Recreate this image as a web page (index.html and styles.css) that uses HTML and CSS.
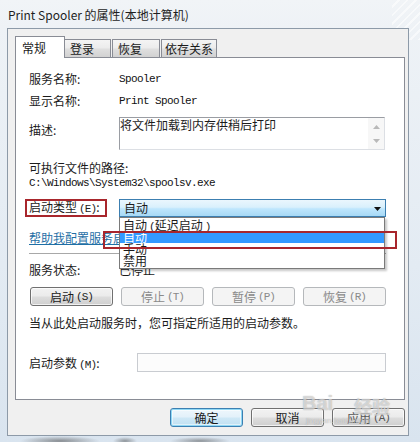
FILE: index.html
```html
<!DOCTYPE html>
<html lang="zh-CN">
<head>
<meta charset="utf-8">
<title>Print Spooler 的属性(本地计算机)</title>
<link rel="stylesheet" href="styles.css">
</head>
<body>
<div class="window">
  <div class="titlebar">Print Spooler 的属性(本地计算机)</div>
  <div class="client">
    <div class="tabs">
      <div class="tab active">常规</div>
      <div class="tab">登录</div>
      <div class="tab">恢复</div>
      <div class="tab">依存关系</div>
    </div>
    <div class="panel">
      <div class="row line22"><span class="label">服务名称:</span><span class="mono">Spooler</span></div>
      <div class="row line22"><span class="label">显示名称:</span><span class="mono">Print Spooler</span></div>
      <div class="row desc">
        <span class="label desc-label">描述:</span>
        <div class="textarea">
          <div class="ta-text">将文件加载到内存供稍后打印</div>
          <div class="ta-scroll">
            <svg width="7" height="4" viewBox="0 0 7 4"><path d="M3.5 0 L7 4 L0 4 Z" fill="#b9b9b9"/></svg>
            <svg width="7" height="4" viewBox="0 0 7 4"><path d="M0 0 L7 0 L3.5 4 Z" fill="#b9b9b9"/></svg>
          </div>
        </div>
      </div>
      <div class="path-label">可执行文件的路径:</div>
      <div class="path mono">C:\Windows\System32\spoolsv.exe</div>
      <div class="row startup">
        <span class="label">启动类型<span class="acc">(E)</span>:</span>
        <div class="combo">
          <span class="combo-text">自动</span>
          <svg class="combo-arrow" width="7" height="4" viewBox="0 0 7 4"><path d="M0 0 L7 0 L3.5 4 Z" fill="#111"/></svg>
          <div class="droplist">
            <div class="opt">自动<span class="acc">(</span>延迟启动<span class="acc">)</span></div>
            <div class="opt sel">自动</div>
            <div class="opt">手动</div>
            <div class="opt">禁用</div>
          </div>
        </div>
      </div>
      <a class="link" href="#">帮助我配置服务启动选项。</a>
      <div class="sep"></div>
      <div class="row status"><span class="label">服务状态:</span><span>已停止</span></div>
      <div class="btnrow">
        <div class="btn">启动<span class="acc">(S)</span></div>
        <div class="btn disabled">停止<span class="acc">(T)</span></div>
        <div class="btn disabled">暂停<span class="acc">(P)</span></div>
        <div class="btn disabled">恢复<span class="acc">(R)</span></div>
      </div>
      <p class="hint">当从此处启动服务时，您可指定所适用的启动参数。</p>
      <div class="row params">
        <span class="label wide">启动参数<span class="acc">(M)</span>:</span>
        <div class="input"></div>
      </div>
      <div class="mark mark-label"></div>
      <div class="mark mark-option"></div>
    </div>
    <div class="footer">
      <div class="btn wbtn default">确定</div>
      <div class="btn wbtn">取消</div>
      <div class="btn wbtn dim">应用<span class="acc">(A)</span></div>
    </div>
  </div>
  <div class="watermark"><span class="wm-big">Bai</span><span class="wm-cn">经验</span><span class="wm-small">jingyan.baidu.com</span></div>
</div>
</body>
</html>
```

FILE: styles.css
```css
* { box-sizing: border-box; }
html, body { margin: 0; padding: 0; }
body {
  font-family: "Noto Sans CJK SC", "Liberation Sans", sans-serif;
  font-size: 12px;
  color: #1b1b1b;
  background: #dfe8f1;
}
.window {
  position: relative;
  width: 420px;
  height: 442px;
  display: flex;
  flex-direction: column;
  overflow: hidden;
  background:
    repeating-linear-gradient(135deg, rgba(255,255,255,0) 0 4px, rgba(255,255,255,0.55) 4px 6px) 392px 0 / 28px 40px no-repeat,
    radial-gradient(ellipse 40px 5px at 60px 441px, rgba(70,70,70,0.55), rgba(70,70,70,0) 100%),
    radial-gradient(ellipse 12px 4px at 125px 441px, rgba(70,70,70,0.5), rgba(70,70,70,0) 100%),
    radial-gradient(ellipse 30px 4px at 200px 441px, rgba(70,70,70,0.5), rgba(70,70,70,0) 100%),
    linear-gradient(180deg, #f1f4f7 0, #eef2f6 28px, #e3ebf3 60%, #d9e4ef 100%);
}
.titlebar {
  height: 28px;
  padding: 7px 0 0 8px;
  line-height: 16px;
  font-size: 12px;
  color: #1e1e1e;
  white-space: nowrap;
}
.client {
  flex: 1;
  margin: 0 11px 6px 7px;
  border: 1px solid #8d9aa8;
  background: #f0f0f0;
  padding: 7px 3px 8px 7px;
  display: flex;
  flex-direction: column;
}
.tabs {
  display: flex;
  align-items: flex-end;
  height: 22px;
  margin-bottom: -1px;
  position: relative;
  z-index: 2;
}
.tab {
  height: 18px;
  margin-bottom: 1px;
  border: 1px solid #898c95;
  border-bottom: none;
  background: linear-gradient(180deg, #f4f4f4 0, #ececec 45%, #dedede 55%, #d2d2d2 100%);
  padding: 0 0 0 5px;
  line-height: 17px;
  white-space: nowrap;
  color: #1b1b1b;
}
.tab.active {
  height: 22px;
  margin-bottom: 0;
  background: #ffffff;
  padding: 2px 0 0 6px;
  line-height: 17px;
  width: 50px;
  position: relative;
  z-index: 3;
}
.tab:nth-child(2) { width: 47px; margin-left: -1px; }
.tab:nth-child(3) { width: 48px; margin-left: 1px; }
.tab:nth-child(4) { width: 56px; margin-left: 1px; padding-left: 3px; }

.panel {
  position: relative;
  z-index: 1;
  width: 390px;
  height: 343px;
  border: 1px solid #898c95;
  background: #ffffff;
  padding: 10px 18px 0 13px;
}
.row { display: flex; align-items: center; }
.line22 { height: 22px; line-height: 22px; }
.label { width: 90px; flex: none; white-space: nowrap; }
.label.wide { width: 108px; }
.mono {
  font-family: "Liberation Mono", monospace;
  font-size: 11px;
  letter-spacing: -0.6px;
  color: #111;
}
.acc {
  font-family: "Liberation Mono", monospace;
  font-size: 11px;
  letter-spacing: -0.9px;
  margin-left: 2px;
}
.desc { margin-top: 5px; align-items: flex-start; }
.desc-label { margin-top: 5px; line-height: 16px; }
.textarea {
  width: 266px;
  height: 33px;
  border: 1px solid #dcdfe4;
  border-top-color: #9a9da3;
  border-left-color: #9a9da3;
  display: flex;
}
.ta-text { flex: 1; line-height: 14px; padding-left: 0; white-space: nowrap; }
.ta-scroll {
  width: 16px;
  background: #f7f7f7;
  display: flex;
  flex-direction: column;
  align-items: center;
  justify-content: space-between;
  padding: 7px 0 6px;
}
.path-label { margin-top: 10px; line-height: 16px; }
.path { line-height: 15px; }
.startup { margin-top: 8px; height: 18px; line-height: 18px; }
.combo {
  position: relative;
  width: 267px;
  height: 18px;
  border: 1px solid #3c7fb1;
  background: linear-gradient(180deg, #eaf6fd 0, #d9f0fc 45%, #bee6fd 55%, #a7d9f5 100%);
  display: flex;
  align-items: center;
  padding-left: 4px;
  line-height: 16px;
}
.combo-text { flex: 1; }
.combo-arrow { margin-right: 4px; margin-top: 2px; }
.droplist {
  position: absolute;
  left: -1px;
  top: calc(100% + 1px);
  width: 266px;
  border: 1px solid #7a7a7a;
  background: #ffffff;
  padding: 1px 0;
  box-shadow: 2px 2px 2px rgba(0,0,0,0.22);
  z-index: 5;
}
.opt {
  height: 12px;
  line-height: 12px;
  padding-left: 3px;
  white-space: nowrap;
  color: #1b1b1b;
}
.opt.sel { background: #3399ff; color: #ffffff; }
.link {
  display: block;
  width: max-content;
  margin-top: 13px;
  line-height: 16px;
  color: #1f6fa5;
  text-decoration: underline;
}
.sep { margin-top: 7px; height: 1px; background: #a8a8a8; }
.status { margin-top: 8px; line-height: 16px; }
.btnrow {
  margin-top: 9px;
  display: flex;
  justify-content: space-between;
  padding: 0 0 0 1px;
}
.btn {
  width: 83px;
  height: 19px;
  border: 1px solid #707070;
  border-radius: 3px;
  background: linear-gradient(180deg, #f2f2f2 0, #ebebeb 48%, #dddddd 52%, #cfcfcf 100%);
  box-shadow: inset 0 0 0 1px rgba(255,255,255,0.7);
  display: flex;
  align-items: center;
  justify-content: center;
  line-height: 16px;
  color: #1b1b1b;
  white-space: nowrap;
}
.btn.disabled {
  border-color: #b5b8bb;
  background: #f4f4f4;
  box-shadow: none;
  color: #8a8a8a;
}
.hint { margin: 9px 0 0; line-height: 16px; white-space: nowrap; }
.params { margin-top: 22px; height: 19px; }
.input {
  width: 249px;
  height: 19px;
  border: 1px solid #c9ccd1;
  background: #fcfcfc;
}
.mark {
  position: absolute;
  border: 2px solid #a8262c;
  z-index: 8;
}
.mark-label { left: 9px; top: 141px; width: 82px; height: 18px; }
.mark-option { left: 87px; top: 173px; width: 294px; height: 18px; }

.footer {
  margin-top: 8px;
  display: flex;
  justify-content: flex-end;
  gap: 8px;
}
.wbtn { width: 73px; }
.wbtn.default {
  border-color: #3c7fb1;
  box-shadow: inset 0 0 0 1px #8fd8f5, inset 0 0 0 2px rgba(255,255,255,0.5);
  background: linear-gradient(180deg, #eef7fc 0, #e3f1fa 48%, #cfe8f6 52%, #bfe0f2 100%);
}
.wbtn.dim { color: #555; }
.watermark {
  position: absolute;
  left: 302px;
  top: 384px;
  z-index: 9;
  color: rgba(255,255,255,0.55);
  text-shadow: 0 0 1px rgba(90,90,90,0.55);
  pointer-events: none;
  width: 110px;
  height: 50px;
}
.wm-big { position: absolute; left: 0; top: 8px; font-family: "Liberation Sans", sans-serif; font-size: 20px; font-weight: bold; }
.wm-cn { position: absolute; left: 52px; top: 9px; font-size: 18px; font-weight: bold; }
.wm-small { position: absolute; left: 4px; top: 32px; font-family: "Liberation Sans", sans-serif; font-size: 8px; }
```
